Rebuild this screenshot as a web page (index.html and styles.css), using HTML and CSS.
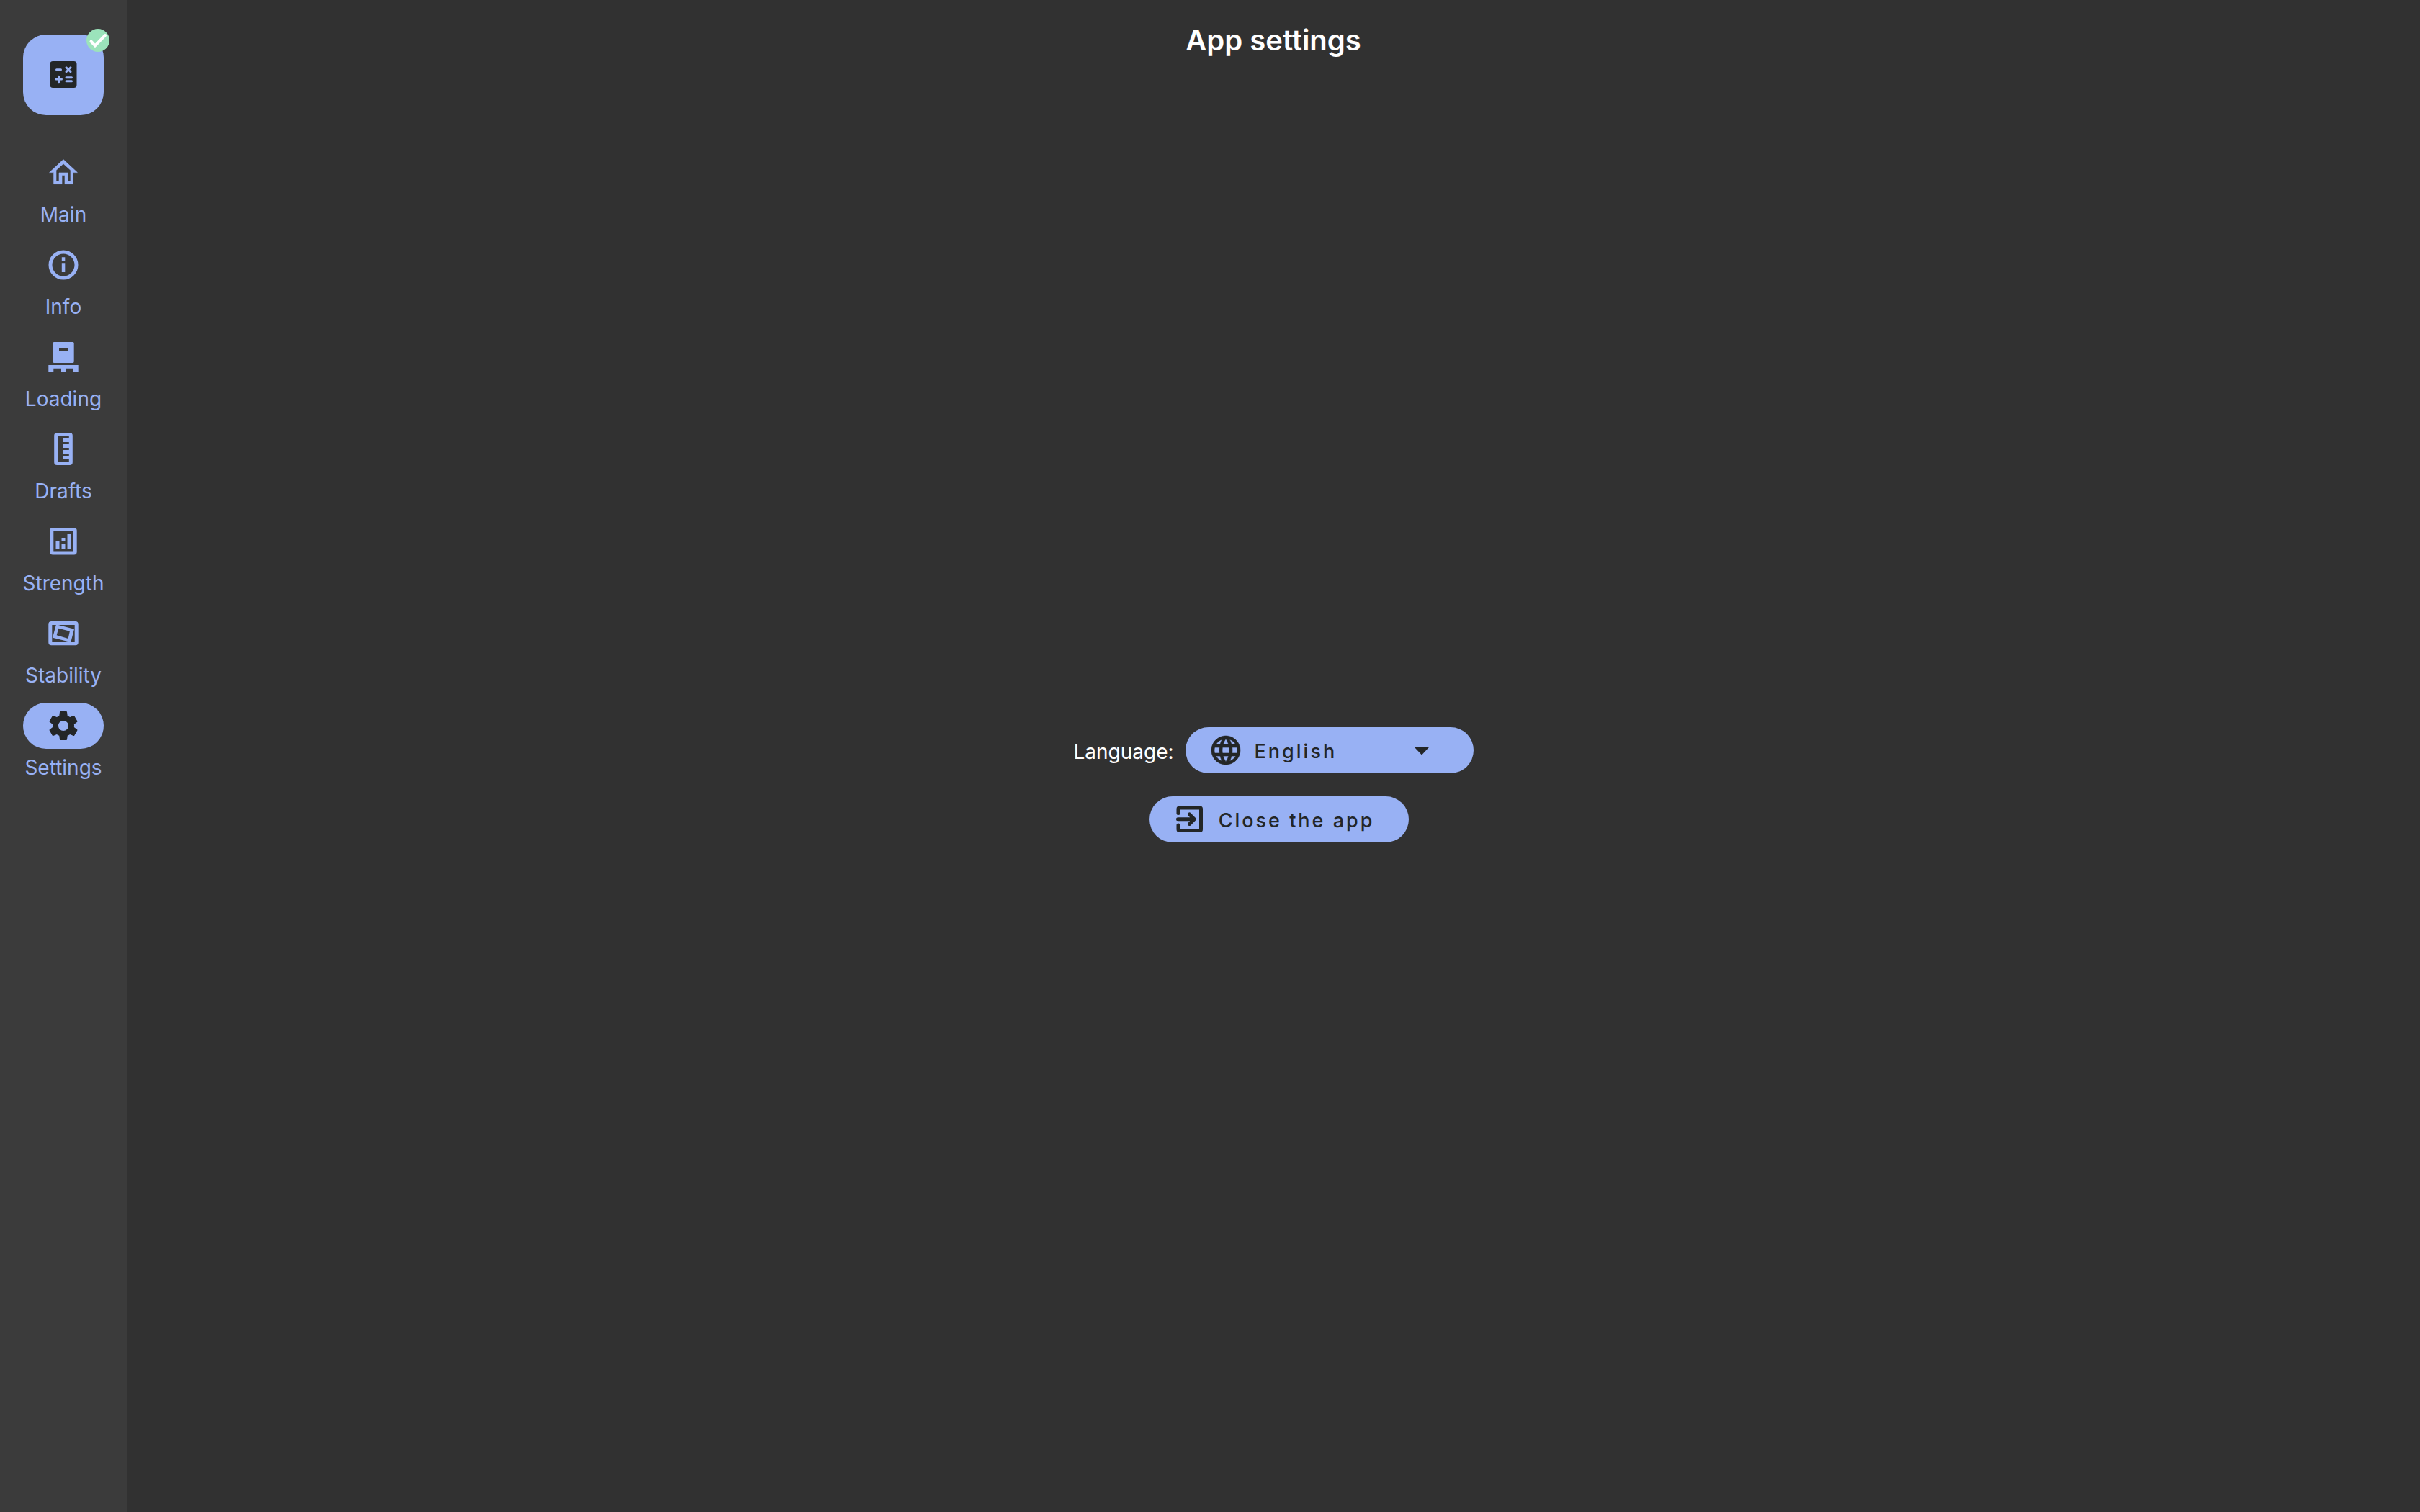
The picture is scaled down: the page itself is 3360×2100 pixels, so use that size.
FILE: index.html
```html
<!DOCTYPE html>
<html lang="en">
<head>
<meta charset="utf-8">
<meta name="viewport" content="width=device-width, initial-scale=1">
<title>App settings</title>
<link rel="stylesheet" href="styles.css">
</head>
<body>
<div class="app">
  <aside class="rail">
    <button class="fab" type="button" aria-label="Calculate">
      <svg class="icon" viewBox="0 0 48 48" aria-hidden="true">
        <rect class="fill" x="5.5" y="5" width="37" height="37" rx="4"/>
        <path class="fab-signs" d="M14.5 16.8h6M28 13.8l6 6M34 13.8l-6 6M14 30h7.5M17.7 26.3v7.5M28 27.8h7.5M28 32.7h7.5"/>
      </svg>
      <span class="badge">
        <svg class="badge-icon" viewBox="0 0 32 32" aria-hidden="true"><path d="M6.5 17.5l5.5 5.8L26 9"/></svg>
      </span>
    </button>
    <nav class="nav">
      <a class="nav-item" href="#main">
        <span class="pill"><svg class="icon" viewBox="0 0 24 24" aria-hidden="true"><path class="fill heavy" d="M12 5.69l5 4.5V18h-2v-6H9v6H7v-7.81l5-4.5M12 2.8L2.300 11.800h3v8h5.700v-6h2v6h5.700v-8h3z"/></svg></span>
        <span class="nav-label">Main</span>
      </a>
      <a class="nav-item" href="#info">
        <span class="pill"><svg class="icon" viewBox="0 0 48 48" aria-hidden="true"><circle class="line" cx="24" cy="24" r="18"/><path class="fill" d="M21.800 13.300h4.500v4.700h-4.500zM21.800 21.300h4.500V34h-4.500z"/></svg></span>
        <span class="nav-label">Info</span>
      </a>
      <a class="nav-item" href="#loading">
        <span class="pill"><svg class="icon" viewBox="0 0 48 48" aria-hidden="true"><path class="fill" fill-rule="evenodd" d="M11 3h26a1.7 1.7 0 0 1 1.7 1.7v25.6A1.7 1.7 0 0 1 37 32H11a1.7 1.7 0 0 1-1.7-1.7V4.7A1.7 1.7 0 0 1 11 3zM18 11.8v3.7h12v-3.7zM3.3 35h41.4v9H37.7v-4.3H27V44h-6v-4.3H10.300V44h-7z"/></svg></span>
        <span class="nav-label">Loading</span>
      </a>
      <a class="nav-item" href="#drafts">
        <span class="pill"><svg class="icon" viewBox="0 0 48 48" aria-hidden="true"><rect class="line" x="13.7" y="3.5" width="20.6" height="40" rx="1.5"/><path class="fill" d="M23.4 9H33v5h-9.6zM23.4 17H33v5h-9.6zM23.4 25H33v5h-9.6zM23.4 33H33v5h-9.6z"/></svg></span>
        <span class="nav-label">Drafts</span>
      </a>
      <a class="nav-item" href="#strength">
        <span class="pill"><svg class="icon" viewBox="0 0 48 48" aria-hidden="true"><rect class="line" x="7.8" y="7.5" width="32.4" height="32.4" rx="1.5"/><path class="fill" d="M13.5 23h5v11.2h-5zM21.5 19h5v5h-5zM21.5 27h5v7.2h-5zM29.5 13h5v21.2h-5z"/></svg></span>
        <span class="nav-label">Strength</span>
      </a>
      <a class="nav-item" href="#stability">
        <span class="pill"><svg class="icon" viewBox="0 0 48 48" aria-hidden="true"><rect class="line" x="5.8" y="9.5" width="36.4" height="28.2" rx="1.5"/><path class="fill" fill-rule="evenodd" d="M14 11.3L39 17.7 34.3 36 9 29.7zM17.3 16.8L14.7 26.2 30.6 31 32.9 20.7z"/></svg></span>
        <span class="nav-label">Stability</span>
      </a>
      <a class="nav-item nav-item-active" href="#settings" aria-current="page">
        <span class="pill"><svg class="icon" viewBox="0 0 24 24" aria-hidden="true"><path class="fill" d="M19.43 12.98c.04-.32.07-.64.07-.98s-.03-.66-.07-.98l2.11-1.65c.19-.15.24-.42.12-.64l-2-3.46c-.12-.22-.39-.3-.61-.22l-2.49 1c-.52-.4-1.08-.73-1.69-.98l-.38-2.65C14.46 2.18 14.25 2 14 2h-4c-.25 0-.46.18-.49.42l-.38 2.65c-.61.25-1.17.59-1.69.98l-2.49-1c-.23-.09-.49 0-.61.22l-2 3.46c-.13.22-.07.49.12.64l2.11 1.65c-.04.32-.07.65-.07.98s.03.66.07.98l-2.11 1.65c-.19.15-.24.42-.12.64l2 3.46c.12.22.39.3.61.22l2.49-1c.52.4 1.08.73 1.69.98l.38 2.65c.03.24.24.42.49.42h4c.25 0 .46-.18.49-.42l.38-2.65c.61-.25 1.17-.59 1.69-.98l2.49 1c.23.09.49 0 .61-.22l2-3.46c.12-.22.07-.49-.12-.64l-2.11-1.65zM12 15.5c-1.93 0-3.5-1.57-3.5-3.5s1.57-3.5 3.5-3.5 3.5 1.57 3.5 3.5-1.57 3.5-3.5 3.5z"/></svg></span>
        <span class="nav-label">Settings</span>
      </a>
    </nav>
  </aside>
  <main class="content">
    <h1 class="title">App settings</h1>
    <div class="settings">
      <div class="row">
        <label class="row-label" for="language">Language:</label>
        <div class="control">
          <svg class="icon" viewBox="0 0 24 24" aria-hidden="true"><path class="fill heavy" d="M11.99 2C6.47 2 2 6.48 2 12s4.47 10 9.99 10C17.52 22 22 17.52 22 12S17.52 2 11.99 2zm6.93 6h-2.95c-.32-1.25-.78-2.45-1.38-3.56 1.84.63 3.37 1.91 4.33 3.56zM12 4.04c.83 1.2 1.48 2.53 1.91 3.96h-3.82c.43-1.43 1.08-2.76 1.91-3.96zM4.26 14C4.1 13.36 4 12.69 4 12s.1-1.36.26-2h3.38c-.08.66-.14 1.32-.14 2s.06 1.34.14 2H4.26zm.82 2h2.95c.32 1.25.78 2.45 1.38 3.56-1.84-.63-3.37-1.9-4.33-3.56zm2.95-8H5.08c.96-1.66 2.49-2.93 4.33-3.56C8.81 5.55 8.35 6.75 8.03 8zM12 19.96c-.83-1.2-1.48-2.53-1.91-3.96h3.82c-.43 1.43-1.08 2.76-1.91 3.96zM14.34 14H9.66c-.09-.66-.16-1.32-.16-2s.07-1.35.16-2h4.68c.09.65.16 1.32.16 2s-.07 1.34-.16 2zm.25 5.56c.6-1.11 1.06-2.31 1.38-3.56h2.95c-.96 1.65-2.49 2.93-4.33 3.56zM16.36 14c.08-.66.14-1.32.14-2s-.06-1.34-.14-2h3.38c.16.64.26 1.31.26 2s-.1 1.36-.26 2h-3.38z"/></svg>
          <select class="control-text select" id="language">
            <option>English</option>
          </select>
          <svg class="icon" viewBox="0 0 24 24" aria-hidden="true"><path class="fill" d="M6.8 9.7h10.400L12 15.2z"/></svg>
        </div>
      </div>
      <button class="control close" type="button">
        <svg class="icon" viewBox="0 0 48 48" aria-hidden="true"><path class="line round" d="M8 15.500V9.500a1.5 1.5 0 0 1 1.5-1.500h28.500a1.500 1.500 0 0 1 1.500 1.500v28.500a1.500 1.500 0 0 1-1.500 1.500H9.500a1.500 1.500 0 0 1-1.500-1.500V32M7.500 23.700h22M23.500 17l6.700 6.700-6.700 6.700"/></svg>
        <span class="control-text">Close the app</span>
      </button>
    </div>
  </main>
</div>
</body>
</html>
```

FILE: styles.css
```css
:root {
  --accent: #98b1f4;
  --ink: #232627;
  --rail: #3b3b3b;
  --surface: #313131;
}

* {
  box-sizing: border-box;
}

body {
  margin: 0;
  background: var(--surface);
  color: #fff;
  font: 400 28px/36px Inter, "Liberation Sans", sans-serif;
}

.app {
  display: flex;
  min-height: 100vh;
}

.rail {
  flex: none;
  width: 176px;
  padding-top: 48px;
  display: flex;
  flex-direction: column;
  align-items: center;
  gap: 48px;
  background: var(--rail);
  color: var(--accent);
}

.icon {
  display: block;
  flex: none;
  width: 48px;
  height: 48px;
}

.fill {
  fill: currentColor;
}

.heavy {
  stroke: currentColor;
  stroke-width: 0.3;
}

.line {
  fill: none;
  stroke: currentColor;
  stroke-width: 5;
}

.round {
  stroke-linecap: round;
  stroke-linejoin: round;
}

.fab {
  position: relative;
  display: flex;
  align-items: center;
  justify-content: center;
  width: 112px;
  height: 112px;
  padding: 0;
  border: 0;
  border-radius: 32px;
  background: var(--accent);
  color: var(--ink);
}

.fab-signs {
  fill: none;
  stroke: var(--accent);
  stroke-width: 3;
  stroke-linecap: round;
}

.badge {
  position: absolute;
  top: -8px;
  right: -8px;
  width: 32px;
  height: 32px;
  border-radius: 50%;
  background: #9be3bb;
}

.badge-icon {
  display: block;
  fill: none;
  stroke: #fff;
  stroke-width: 4;
  stroke-linecap: round;
}

.nav {
  display: flex;
  flex-direction: column;
  gap: 20px;
}

.nav-item {
  display: flex;
  flex-direction: column;
  align-items: center;
  gap: 8px;
  color: inherit;
  text-decoration: none;
}

.pill {
  display: flex;
  align-items: center;
  justify-content: center;
  width: 112px;
  height: 64px;
  border-radius: 32px;
}

.nav-item-active .pill {
  background: var(--accent);
  color: var(--ink);
}

.nav-label {
  white-space: nowrap;
}

.content {
  flex: 1;
  display: flex;
  flex-direction: column;
}

.title {
  margin: 0;
  padding-top: 32px;
  font-size: 40px;
  line-height: 48px;
  font-weight: 600;
  text-align: center;
}

.settings {
  flex: 1;
  display: flex;
  flex-direction: column;
  align-items: center;
  justify-content: center;
  gap: 32px;
}

.row {
  display: flex;
  align-items: center;
  gap: 16px;
}

.row-label {
  padding-top: 4px;
}

.control {
  display: flex;
  align-items: center;
  gap: 16px;
  height: 64px;
  padding: 0 48px 0 32px;
  border: 0;
  border-radius: 32px;
  background: var(--accent);
  color: var(--ink);
  font: inherit;
}

.row .control {
  width: 400px;
}

.control-text {
  padding: 4px 0 0;
  font-size: 27px;
  font-weight: 500;
  line-height: 36px;
  letter-spacing: 3px;
}

.select {
  flex: 1;
  min-width: 0;
  border: 0;
  appearance: none;
  background: none;
  color: inherit;
  font-family: inherit;
}

.close {
  margin-left: 16px;
}
```
